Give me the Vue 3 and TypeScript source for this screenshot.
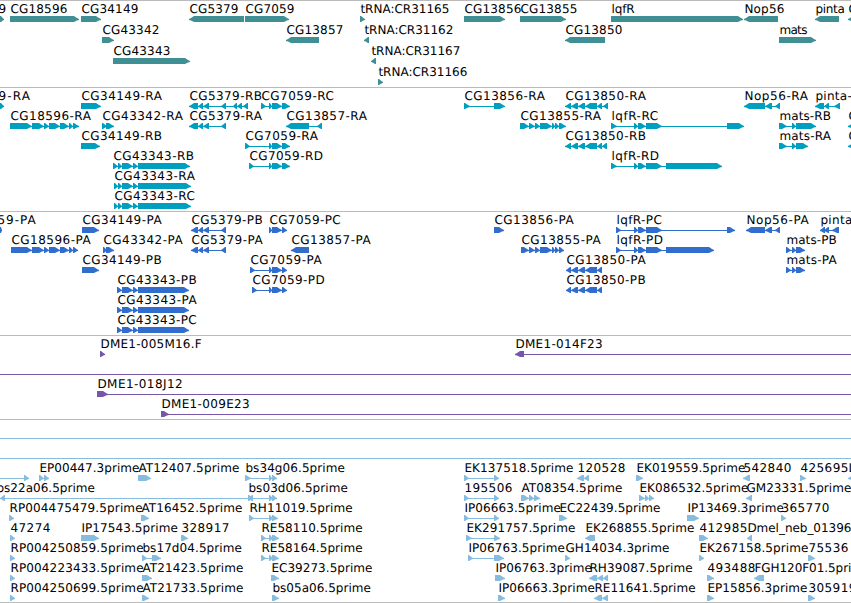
<template>
  <main class="browser">
    <section v-for="track in tracks" :key="track.name" class="track" :class="track.name">
      <svg class="canvas" width="851" :height="track.height">
        <g
          v-for="(feature, i) in track.features"
          :key="i"
          :transform="`translate(0 ${feature.row * track.pitch})`"
        >
          <rect
            v-if="feature.lineEnd > feature.lineStart"
            class="intron"
            :x="feature.lineStart"
            y="18"
            :width="feature.lineEnd - feature.lineStart"
            height="1"
          />
          <path v-for="(part, j) in feature.parts" :key="j" class="exon" :d="arrow(part, feature.dir)" />
          <text
            v-if="feature.label"
            class="label"
            :x="feature.x + 0.4"
            y="12"
            :textLength="labelWidth(feature.label)"
          >{{ feature.label }}</text>
        </g>
      </svg>
    </section>
  </main>
</template>

<script setup lang="ts">
type Part = [number, number]

interface Feature {
  row: number
  label: string
  dir: number
  parts: Part[]
  x: number
  lineStart: number
  lineEnd: number
}

interface Options {
  x?: number
  from?: number
  to?: number
}

interface Track {
  name: string
  height: number
  pitch: number
  features: Feature[]
}

// "113-118 118-122" -> [[113, 118], [118, 122]]
const f = (row: number, label: string, dir: number, spans: string, o: Options = {}): Feature => {
  const parts = spans
    ? spans.split(' ').map((s) => s.split('-').map(Number) as Part)
    : []
  const first = parts.length ? parts[0][0] : 0
  const last = parts.length ? parts[parts.length - 1][0] : 0
  return {
    row,
    label,
    dir,
    parts,
    x: o.x ?? first,
    lineStart: o.from ?? first,
    lineEnd: o.to ?? last,
  }
}

// slightly bulged head, so that short exons keep their weight
const arrow = ([a, b]: Part, dir: number) => {
  const head = Math.min(b - a - 1, 5)
  const start = dir > 0 ? a : b
  const tip = dir > 0 ? b : a
  const neck = tip - dir * head
  const mid = tip - dir * head * 0.4
  return `M${start} 15H${neck}L${mid} 17L${tip} 18V19L${mid} 19.5L${neck} 21H${start}Z`
}

const advances: Record<string, number> = {
  A: 8, C: 8, D: 9, E: 7, F: 6, G: 9, H: 9, I: 3.5, J: 4, K: 8, L: 7, M: 10, N: 9, P: 7, R: 8.2, T: 7,
  a: 7, e: 7, f: 4, i: 3, l: 3, m: 11, n: 7, o: 7, r: 5, s: 5.5, t: 4.5, '.': 4, ':': 3, '-': 7.3, _: 6,
}

const labelWidth = (label: string) =>
  [...label].reduce((sum, c) => sum + (advances[c] ?? 8), 0)

const cg18596 = '32-44 44-49 49-60 60-69 69-73'
const cg13855 = '529-535 535-540 540-552 552-555 555-559'
const cg13850 = '571-578 578-585 585-597 597-602'
const lqfr = '634-638 638-646 646-662'

const tracks: Track[] = [
  {
    name: 'genes',
    height: 86,
    pitch: 21,
    features: [
      f(0, '9', 1, '0-4', { x: -2 }),
      f(0, 'CG18596', 1, '10-79'),
      f(0, 'CG34149', 1, '81-101'),
      f(1, 'CG43342', 1, '102-114'),
      f(2, 'CG43343', 1, '113-190'),
      f(0, 'CG5379', -1, '189-244'),
      f(0, 'CG7059', 1, '245-289'),
      f(1, 'CG13857', -1, '286-319'),
      f(0, 'tRNA:CR31165', 1, '360-365'),
      f(1, 'tRNA:CR31162', -1, '364-369'),
      f(2, 'tRNA:CR31167', -1, '371-376'),
      f(3, 'tRNA:CR31166', 1, '378-383'),
      f(0, 'CG13856', 1, '464-505'),
      f(0, 'CG13855', 1, '520-566'),
      f(1, 'CG13850', -1, '565-605'),
      f(0, 'lqfR', 1, '611-743'),
      f(0, 'Nop56', -1, '744-778'),
      f(1, 'mats', 1, '779-816'),
      f(0, 'pinta', -1, '815-839'),
      f(0, 'C', -1, '848-870'),
    ],
  },
  {
    name: 'transcripts',
    height: 123,
    pitch: 20,
    features: [
      f(0, '9-RA', 1, '0-4', { x: -2 }),
      f(0, 'CG34149-RA', 1, '81-101'),
      f(0, 'CG5379-RB', -1, '189-198 198-203 203-209 221-226 233-237 237-242 243-248'),
      f(0, 'CG7059-RC', 1, '261-266 269-272 272-282 282-290'),
      f(0, 'CG13856-RA', 1, '464-470 494-505'),
      f(0, 'CG13850-RA', -1, `565-571 ${cg13850} 603-608`),
      f(0, 'Nop56-RA', -1, '744-765 765-772 775-780'),
      f(0, 'pinta-RA', -1, '815-824 824-829 834-840'),
      f(1, 'CG18596-RA', 1, `10-32 ${cg18596} 73-79`),
      f(1, 'CG43342-RA', 1, '102-107 106-114'),
      f(1, 'CG5379-RA', -1, '189-198 198-203 203-209 221-226'),
      f(1, 'CG13857-RA', -1, '286-309 317-322'),
      f(1, 'CG13855-RA', 1, `520-529 ${cg13855} 559-566`),
      f(1, 'lqfR-RC', 1, `611-617 ${lqfr} 727-744`),
      f(1, 'mats-RB', 1, '779-787 792-796 796-816'),
      f(1, 'C', -1, '848-870'),
      f(2, 'CG34149-RB', 1, '81-100'),
      f(2, 'CG7059-RA', 1, '245-250 269-272 272-282 282-290'),
      f(2, 'CG13850-RB', -1, `565-571 ${cg13850} 602-607`),
      f(2, 'mats-RA', 1, '779-787 792-796 796-808'),
      f(2, 'C', -1, '848-870'),
      f(3, 'CG43343-RB', 1, '113-118 118-122 122-133 133-138 138-190'),
      f(3, 'CG7059-RD', 1, '249-254 269-272 272-282 282-290'),
      f(3, 'lqfR-RD', 1, `611-617 ${lqfr} 666-722`),
      f(4, 'CG43343-RA', 1, '114-118 118-122 122-133 133-138 138-191'),
      f(5, 'CG43343-RC', 1, '114-118 118-122 122-133 133-138 138-191'),
    ],
  },
  {
    name: 'proteins',
    height: 123,
    pitch: 20,
    features: [
      f(0, '59-PA', 1, '0-2', { x: -3 }),
      f(0, 'CG34149-PA', 1, '82-99'),
      f(0, 'CG5379-PB', -1, '191-198 198-203 203-209 221-226'),
      f(0, 'CG7059-PC', 1, '269-272 272-282 282-287'),
      f(0, 'CG13856-PA', 1, '494-504'),
      f(0, 'lqfR-PC', 1, `616-621 ${lqfr} 727-735`),
      f(0, 'Nop56-PA', -1, '746-765 765-772 775-780'),
      f(0, 'pinta-PA', -1, '820-825 824-829 832-839'),
      f(1, 'CG18596-PA', 1, `11-32 ${cg18596} 73-78`),
      f(1, 'CG43342-PA', 1, '103-107 106-114'),
      f(1, 'CG5379-PA', -1, '191-198 198-203 203-209 221-226'),
      f(1, 'CG13857-PA', -1, '291-309'),
      f(1, 'CG13855-PA', 1, `521-529 ${cg13855} 559-564`),
      f(1, 'lqfR-PD', 1, `616-621 ${lqfr} 666-714`),
      f(1, 'mats-PB', 1, '786-791 792-796 796-805'),
      f(2, 'CG34149-PB', 1, '82-99'),
      f(2, 'CG7059-PA', 1, '250-255 269-272 272-282 282-287'),
      f(2, 'CG13850-PA', -1, `566-571 ${cg13850}`),
      f(2, 'mats-PA', 1, '786-791 792-796 796-805'),
      f(3, 'CG43343-PB', 1, '117-122 122-133 133-138 138-189'),
      f(3, 'CG7059-PD', 1, '252-257 269-272 272-282 282-287'),
      f(3, 'CG13850-PB', -1, `566-571 ${cg13850}`),
      f(4, 'CG43343-PA', 1, '117-122 122-133 133-138 138-189'),
      f(5, 'CG43343-PC', 1, '117-122 122-133 133-138 138-189'),
    ],
  },
  {
    name: 'clones',
    height: 83,
    pitch: 20,
    features: [
      f(0, 'DME1-005M16.F', 1, '100-105'),
      f(0, 'DME1-014F23', -1, '515-524', { to: 851 }),
      f(1, '', 1, '', { to: 851 }),
      f(2, 'DME1-018J12', 1, '97-108', { to: 851 }),
      f(3, 'DME1-009E23', 1, '161-169', { to: 851 }),
    ],
  },
  {
    name: 'ests',
    height: 182,
    pitch: 20,
    features: [
      f(0, '', 1, '', { to: 851 }),
      f(1, '', 1, '', { to: 851 }),
      f(2, '', 1, '24-29', { from: 0 }),
      f(2, 'EP00447.3prime', 1, '39-44 44-49'),
      f(2, 'AT12407.5prime', 1, '138-151'),
      f(2, 'bs34g06.5prime', 1, '245-251 269-272 272-277'),
      f(2, 'EK137518.5prime', 1, '464-469 494-499'),
      f(2, '120528', -1, '577-584 584-589'),
      f(2, 'EK019559.5prime', 1, '636-643'),
      f(2, '542840', -1, '743-750'),
      f(2, '425695', 1, '800-806'),
      f(2, 'L', -1, '848-870'),
      f(3, 'bs22a06.5prime', -1, '0-5 248-253', { x: -4 }),
      f(3, 'bs03d06.5prime', 1, '248-253 269-273 272-277'),
      f(3, '195506', 1, '464-469 494-499'),
      f(3, 'AT08354.5prime', 1, '521-529 529-534 534-540'),
      f(3, 'EK086532.5prime', 1, '639-645 645-649 649-654'),
      f(3, 'GM23331.5prime', -1, '746-752'),
      f(4, 'RP004475479.5prime', 1, '9-14'),
      f(4, 'AT16452.5prime', 1, '141-149'),
      f(4, 'RH11019.5prime', 1, '249-254 269-273 272-278'),
      f(4, 'IP06663.5prime', 1, '464-469 494-499'),
      f(4, 'EC22439.5prime', 1, '559-567'),
      f(4, 'IP13469.3prime', 1, '687-699'),
      f(4, '365770', 1, '781-786'),
      f(5, '47274', 1, '10-15'),
      f(5, 'IP17543.5prime', 1, '81-99'),
      f(5, '328917', 1, '181-188'),
      f(5, 'RE58110.5prime', 1, '261-266 269-273 272-279'),
      f(5, 'EK291757.5prime', 1, '466-472 494-500'),
      f(5, 'EK268855.5prime', -1, '585-595'),
      f(5, '412985', 1, '699-708'),
      f(5, 'Dmel_neb_01396', -1, '747-752'),
      f(6, 'RP004250859.5prime', 1, '10-15'),
      f(6, 'bs17d04.5prime', 1, '142-147 152-161'),
      f(6, 'RE58164.5prime', 1, '261-266 269-273 272-279'),
      f(6, 'IP06763.5prime', 1, '468-473 494-504'),
      f(6, 'GH14034.3prime', 1, '565-570'),
      f(6, 'EK267158.5prime', 1, '699-704'),
      f(6, '75536', 1, '808-815'),
      f(7, 'RP004223433.5prime', 1, '10-15'),
      f(7, 'AT21423.5prime', 1, '142-152'),
      f(7, 'EC39273.5prime', 1, '271-279'),
      f(7, 'IP06763.3prime', 1, '495-505'),
      f(7, 'RH39087.5prime', -1, '589-597 597-603 603-608'),
      f(7, '493488', 1, '707-714'),
      f(7, 'FGH120F01.5prime', -1, '754-764'),
      f(8, 'RP004250699.5prime', 1, '10-15'),
      f(8, 'AT21733.5prime', 1, '142-149'),
      f(8, 'bs05a06.5prime', 1, '272-279'),
      f(8, 'IP06663.3prime', 1, '498-505'),
      f(8, 'RE11641.5prime', -1, '594-602 602-608'),
      f(8, 'EP15856.3prime', 1, '707-714'),
      f(8, '305919', 1, '808-815'),
    ],
  },
]
</script>

<style>
body {
  background: #fff;
  overflow: hidden;
}
</style>

<style scoped>
.browser {
  display: flex;
  flex-direction: column;
  width: 851px;
  overflow: hidden;
  border-bottom: 1px solid #bbb;
}

.track {
  border-top: 1px solid #bbb;
}

.canvas {
  display: block;
}

.label {
  font-family: 'DejaVu Sans', sans-serif;
  font-size: 12px;
  text-rendering: geometricPrecision;
  fill: #000;
}

.intron,
.exon {
  fill: currentColor;
}

.genes {
  color: #3f8f94;
}

.transcripts {
  color: #009fc0;
}

.proteins {
  color: #306dcc;
}

.clones {
  color: #7755a8;
}

.ests {
  color: #88bcde;
}
</style>
